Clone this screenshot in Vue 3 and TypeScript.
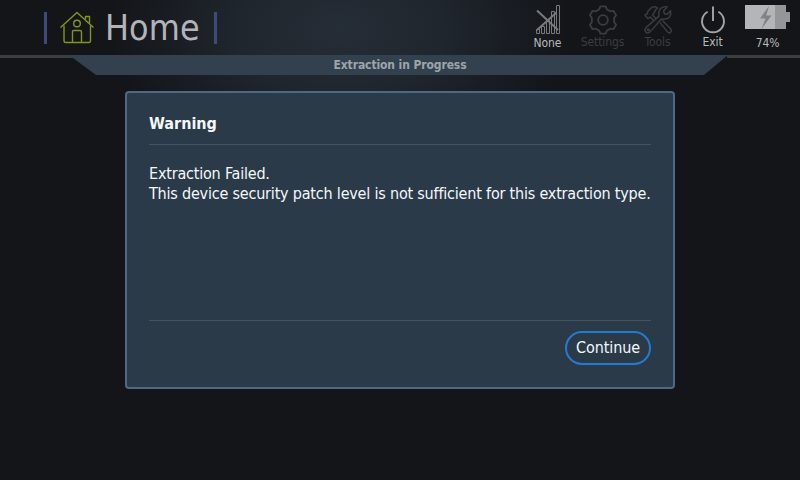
<script setup lang="ts">
interface Tool {
  id: string
  label: string
  muted: boolean
}

const tools: Tool[] = [
  { id: 'signal', label: 'None', muted: false },
  { id: 'settings', label: 'Settings', muted: true },
  { id: 'repair', label: 'Tools', muted: true },
  { id: 'exit', label: 'Exit', muted: false },
  { id: 'battery', label: '74%', muted: false },
]
</script>

<template>
  <div class="screen">
    <header class="topbar">
      <div class="brand">
        <svg class="house" width="36" height="34" viewBox="0 0 36 34">
          <path d="M1.500 16.500 L18 1.500 L34.500 16.500" />
          <path d="M5 14.500 V29.500 Q5 31.500 7 31.500 H30 Q31.500 31.500 31.500 29.500 V14.500" />
          <path d="M13.500 31 V20.500 Q13.500 19.500 14.500 19.500 H21 Q22.500 19.500 22.500 21 V31" />
          <path d="M26.500 8 V5.500 H30.500 V12" />
          <circle cx="18" cy="12.500" r="3.300" />
        </svg>
        <h1>Home</h1>
      </div>
      <nav class="tools">
        <div v-for="tool in tools" :key="tool.id" class="tool" :class="[tool.id, { muted: tool.muted }]">
          <svg v-if="tool.id === 'signal'" width="24" height="30" viewBox="0 0 24 30">
            <g fill="none" stroke="#77797c" stroke-width="1">
              <path d="M.5 24.500h3v4h-3z M5.500 21.500h3v7h-3z M10.500 15.500h3v13h-3z M15.500 6.500h3v22h-3z M20.500 .5h3v28h-3z" />
              <path d="M1 5.500 L22 25 M20.500 7.500 L1 25" stroke-width="2" />
            </g>
          </svg>
          <svg v-else-if="tool.id === 'settings'" width="30" height="31" viewBox="0 0 30 31">
            <path d="M11 4.500 L12.300 1.500 H17.700 L19 4.500 L22.500 6.500 L25.800 6 L28.500 10.600 L26.500 13.500 V17.500 L28.500 20.400 L25.800 25 L22.500 24.500 L19 26.500 L17.700 29.500 H12.300 L11 26.500 L7.500 24.500 L4.200 25 L1.500 20.400 L3.500 17.500 V13.500 L1.500 10.600 L4.200 6 L7.500 6.500 Z" />
            <circle cx="15" cy="15.500" r="5" />
          </svg>
          <svg v-else-if="tool.id === 'repair'" width="30" height="31" viewBox="0 0 30 31">
            <path d="M18.500 14.500 L7 27.500 Q4.500 30 2.300 27.800 Q0.500 25.500 3 23 L16 11.500 Q14.800 5 19.500 2.500 Q22 1.200 24.500 2 L20.800 6 L21.500 9 L24.500 9.500 L28 6 Q29 12 24.500 14 Q21.500 15 18.500 14.500 Z" />
            <path d="M13 14 L9.500 10.500 L12.500 5 L14.500 3 Q10.500 .5 7.500 3.500 L4.500 6.500 L4 9 L1.500 10.500 L4.500 14 L7 12.500 L10.500 16 M17 18 L25 28 Q27 30 28.500 27.500 Q29.500 26 27.500 24 L19.500 16" />
            <circle cx="5" cy="25.500" r=".8" />
          </svg>
          <svg v-else-if="tool.id === 'exit'" width="28" height="31" viewBox="0 0 28 31">
            <path d="M8.500 7 A11.300 11.300 0 1 0 19.500 7 M14 1.500 V16.500" fill="none" stroke="#a3a4a6" stroke-width="2" />
          </svg>
          <svg v-else width="45" height="24" viewBox="0 0 45 24">
            <path d="M0 0h41v24H0z" fill="#b4b5b6" />
            <path d="M30 0h11v24H30z M41 7h4v10h-4z" fill="#949698" />
            <path d="M24 1 L15 13.500 H20.500 L16.500 24 L26.500 10.500 H21.200 Z" fill="#808285" />
          </svg>
          <span>{{ tool.label }}</span>
        </div>
      </nav>
    </header>

    <div class="status">
      <svg class="status-shape" width="800" height="20" viewBox="0 0 800 20">
        <path d="M73 0H728L704 20H96L73 3z" fill="#33414e" />
        <path d="M0 0H73V3H0z M727 0H800V3H727z" fill="#393d44" />
      </svg>
      <span>Extraction in Progress</span>
    </div>

    <section class="dialog" role="alertdialog">
      <h2>Warning</h2>
      <div class="message">
        <p>Extraction Failed.</p>
        <p>This device security patch level is not sufficient for this extraction type.</p>
      </div>
      <footer>
        <button type="button">Continue</button>
      </footer>
    </section>
  </div>
</template>

<style>
body {
  background: #131519;
}
</style>

<style scoped>
.screen {
  box-sizing: border-box;
  width: 800px;
  height: 480px;
  overflow: hidden;
  font-family: 'DejaVu Sans Condensed', 'DejaVu Sans', sans-serif;
  font-stretch: condensed;
  background:
    radial-gradient(ellipse 230px 140px at 340px 30px, #252d36 0%, #20262e 45%, transparent 100%),
    #131519;
}
.topbar {
  display: flex;
  justify-content: space-between;
  height: 55px;
}
.brand {
  display: flex;
  box-sizing: border-box;
  width: 173px;
  height: 32px;
  margin: 12px 0 0 44px;
  border: solid #3e4a79;
  border-width: 0 3px;
}
.house {
  flex: none;
  margin: -1px 10px 0 12px;
  fill: none;
  stroke: #829815;
  stroke-width: 1.4;
  stroke-linejoin: round;
}
h1 {
  margin: 0;
  font-size: 35.5px;
  font-weight: 400;
  line-height: 31px;
  letter-spacing: 0.1px;
  color: #b2b4b8;
}
.tools {
  display: grid;
  grid-template-columns: 55px 55px 55px 55px 55px;
  padding: 5px 5px 0 0;
}
.tool {
  display: flex;
  flex-direction: column;
  align-items: center;
  height: 45px;
  font-size: 12px;
  line-height: 14px;
  color: #b8babc;
}
.tool span {
  margin-top: auto;
  letter-spacing: -0.1px;
}
.tool.settings,
.tool.repair,
.tool.exit {
  height: 44px;
}
.tool.muted {
  color: #3b3d41;
  fill: none;
  stroke: #3b3d41;
  stroke-width: 1.9;
  stroke-linejoin: round;
}
.tool.repair svg {
  stroke-width: 1.5;
}
.tool.muted span {
  stroke: none;
}
.status {
  display: grid;
  height: 20px;
}
.status > * {
  grid-area: 1 / 1;
}
.status span {
  font-size: 12px;
  font-weight: 700;
  line-height: 20px;
  letter-spacing: -0.1px;
  text-align: center;
  color: #9da5ac;
}
.dialog {
  display: flex;
  flex-direction: column;
  box-sizing: border-box;
  width: 550px;
  height: 298px;
  margin: 16px 0 0 125px;
  padding: 21px 22px 22px;
  border: 2px solid #4b6b84;
  border-radius: 4px;
  background: #2a3a49;
  color: #f5f8fa;
  font-size: 16px;
  line-height: 20px;
}
h2 {
  margin: 0;
  padding-bottom: 10px;
  border-bottom: 1px solid #435463;
  font-size: 16px;
  line-height: 20px;
}
.message {
  flex: 1;
  padding-top: 19px;
}
p {
  margin: 0;
  letter-spacing: -0.195px;
  white-space: nowrap;
}
footer {
  display: flex;
  justify-content: flex-end;
  padding-top: 10px;
  border-top: 1px solid #435463;
}
button {
  width: 86px;
  height: 34px;
  padding: 0;
  border: 2px solid #257bd0;
  border-radius: 17px;
  background: transparent;
  color: inherit;
  font: inherit;
  letter-spacing: -0.1px;
}
</style>
